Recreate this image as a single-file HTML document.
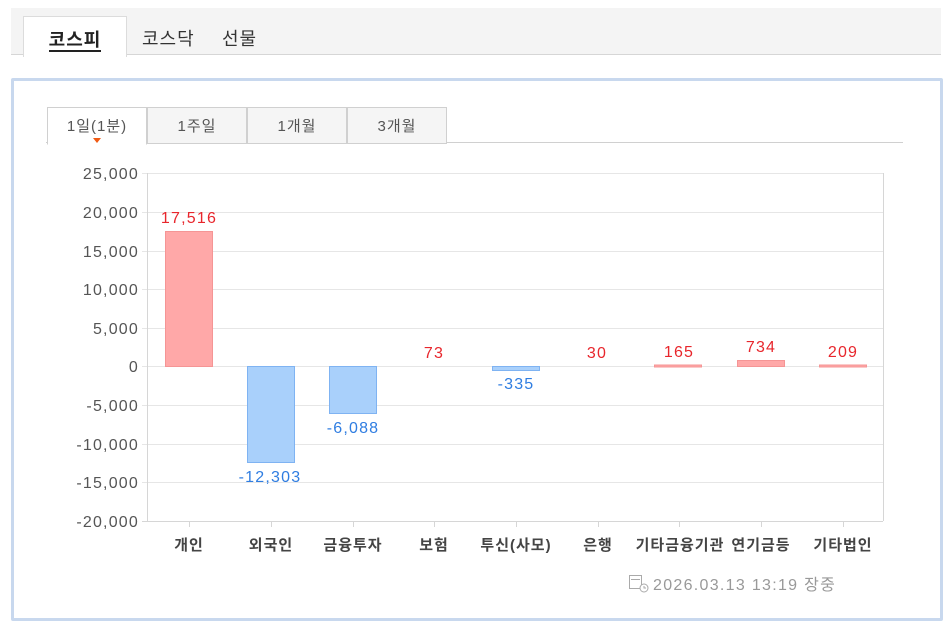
<!DOCTYPE html>
<html><head><meta charset="utf-8">
<style>
html,body{margin:0;padding:0;background:#fff;width:951px;height:635px;overflow:hidden;font-family:"Liberation Sans","Noto Sans CJK KR",sans-serif;}
.topbar{position:absolute;left:11px;top:8px;width:930px;height:46px;background:#f4f4f4;border-bottom:1px solid #d6d6d6;}
.tab{position:absolute;top:16px;height:40px;font-size:18px;letter-spacing:1px;color:#333;line-height:46px;}
.act{left:23px;width:102px;background:#fff;border:1px solid #dcdcdc;border-bottom:none;text-align:center;font-weight:bold;color:#222;top:16px;height:40px;line-height:46px;}
.act span{border-bottom:2px solid #222;}
.box{position:absolute;left:11px;top:78px;width:926px;height:537px;border:3px solid #c8d8ee;border-radius:2px;}
.ptab{position:absolute;top:107px;height:35px;width:98px;border:1px solid #d0d0d0;background:#f5f5f5;font-size:15px;letter-spacing:1px;color:#555;text-align:center;line-height:38px;}
.pline{position:absolute;left:46px;top:142px;width:857px;height:1px;background:#d0d0d0;}
</style></head><body>
<div class="topbar"></div>
<div class="tab act"><span>코스피</span></div>
<div class="tab" style="left:142px">코스닥</div>
<div class="tab" style="left:222px">선물</div>
<div class="box"></div>
<div class="pline"></div>
<div class="ptab" style="left:47px;background:#fff;border-bottom-color:#fff;height:36px">1일(1분)</div>
<div class="ptab" style="left:147px">1주일</div>
<div class="ptab" style="left:247px">1개월</div>
<div class="ptab" style="left:347px">3개월</div>
<svg style="position:absolute;left:0;top:0" width="951" height="635" font-family="Liberation Sans, Noto Sans CJK KR, sans-serif">
<polygon points="93,138 101,138 97,143" fill="#f05a14"/>
<g stroke="#e6e6e6" stroke-width="1">
<line x1="142" y1="173.5" x2="883" y2="173.5"/>
<line x1="142" y1="212.5" x2="883" y2="212.5"/>
<line x1="142" y1="251.5" x2="883" y2="251.5"/>
<line x1="142" y1="289.5" x2="883" y2="289.5"/>
<line x1="142" y1="328.5" x2="883" y2="328.5"/>
<line x1="142" y1="366.5" x2="883" y2="366.5"/>
<line x1="142" y1="405.5" x2="883" y2="405.5"/>
<line x1="142" y1="444.5" x2="883" y2="444.5"/>
<line x1="142" y1="482.5" x2="883" y2="482.5"/>
</g>
<g stroke="#d6d6d6">
<line x1="147.5" y1="173" x2="147.5" y2="521"/>
<line x1="883.5" y1="173" x2="883.5" y2="521"/>
<line x1="142" y1="521.5" x2="883" y2="521.5"/>
<line x1="189.5" y1="521" x2="189.5" y2="527"/>
<line x1="271.5" y1="521" x2="271.5" y2="527"/>
<line x1="353.5" y1="521" x2="353.5" y2="527"/>
<line x1="434.5" y1="521" x2="434.5" y2="527"/>
<line x1="516.5" y1="521" x2="516.5" y2="527"/>
<line x1="598.5" y1="521" x2="598.5" y2="527"/>
<line x1="679.5" y1="521" x2="679.5" y2="527"/>
<line x1="761.5" y1="521" x2="761.5" y2="527"/>
<line x1="843.5" y1="521" x2="843.5" y2="527"/>
</g>
<g font-size="16" fill="#555" text-anchor="end" letter-spacing="1.2">
<text x="139" y="179">25,000</text>
<text x="139" y="218">20,000</text>
<text x="139" y="257">15,000</text>
<text x="139" y="295">10,000</text>
<text x="139" y="334">5,000</text>
<text x="139" y="372">0</text>
<text x="139" y="411">-5,000</text>
<text x="139" y="450">-10,000</text>
<text x="139" y="488">-15,000</text>
<text x="139" y="527">-20,000</text>
</g>
<g fill="#ffa8a8" stroke="#f59595">
<rect x="165.5" y="231.5" width="47" height="135"/>
<rect x="654.5" y="365" width="47" height="2"/>
<rect x="737.5" y="360.5" width="47" height="6"/>
<rect x="819.5" y="365" width="47" height="2"/>
</g>
<g fill="#a9d0fb" stroke="#7fb3f2">
<rect x="247.5" y="366.5" width="47" height="96"/>
<rect x="329.5" y="366.5" width="47" height="47"/>
<rect x="492.5" y="366.5" width="47" height="4"/>
</g>
<g font-size="16" text-anchor="middle" fill="#e8262c" letter-spacing="1.2">
<text x="189" y="223">17,516</text>
<text x="434" y="358">73</text>
<text x="597" y="358">30</text>
<text x="679" y="357">165</text>
<text x="761" y="352">734</text>
<text x="843" y="357">209</text>
</g>
<g font-size="16" text-anchor="middle" fill="#2f7de1" letter-spacing="1.2">
<text x="270" y="482">-12,303</text>
<text x="353" y="433">-6,088</text>
<text x="516" y="389">-335</text>
</g>
<g font-size="15" text-anchor="middle" fill="#444" font-weight="bold" letter-spacing="1">
<text x="189" y="550">개인</text>
<text x="271" y="550">외국인</text>
<text x="353" y="550">금융투자</text>
<text x="434" y="550">보험</text>
<text x="516" y="550">투신(사모)</text>
<text x="598" y="550">은행</text>
<text x="680" y="550">기타금융기관</text>
<text x="761" y="550">연기금등</text>
<text x="843" y="550">기타법인</text>
</g>
<g stroke="#aaa" fill="none" stroke-width="1">
<rect x="629.5" y="575.5" width="12" height="13"/>
<line x1="631" y1="579.5" x2="640" y2="579.5"/>
<circle cx="644" cy="588" r="4" fill="#fff"/>
<path d="M644 586v2h2"/>
</g>
<text x="653" y="590" font-size="16" fill="#999" letter-spacing="1.3">2026.03.13 13:19 장중</text>
</svg>
</body></html>
